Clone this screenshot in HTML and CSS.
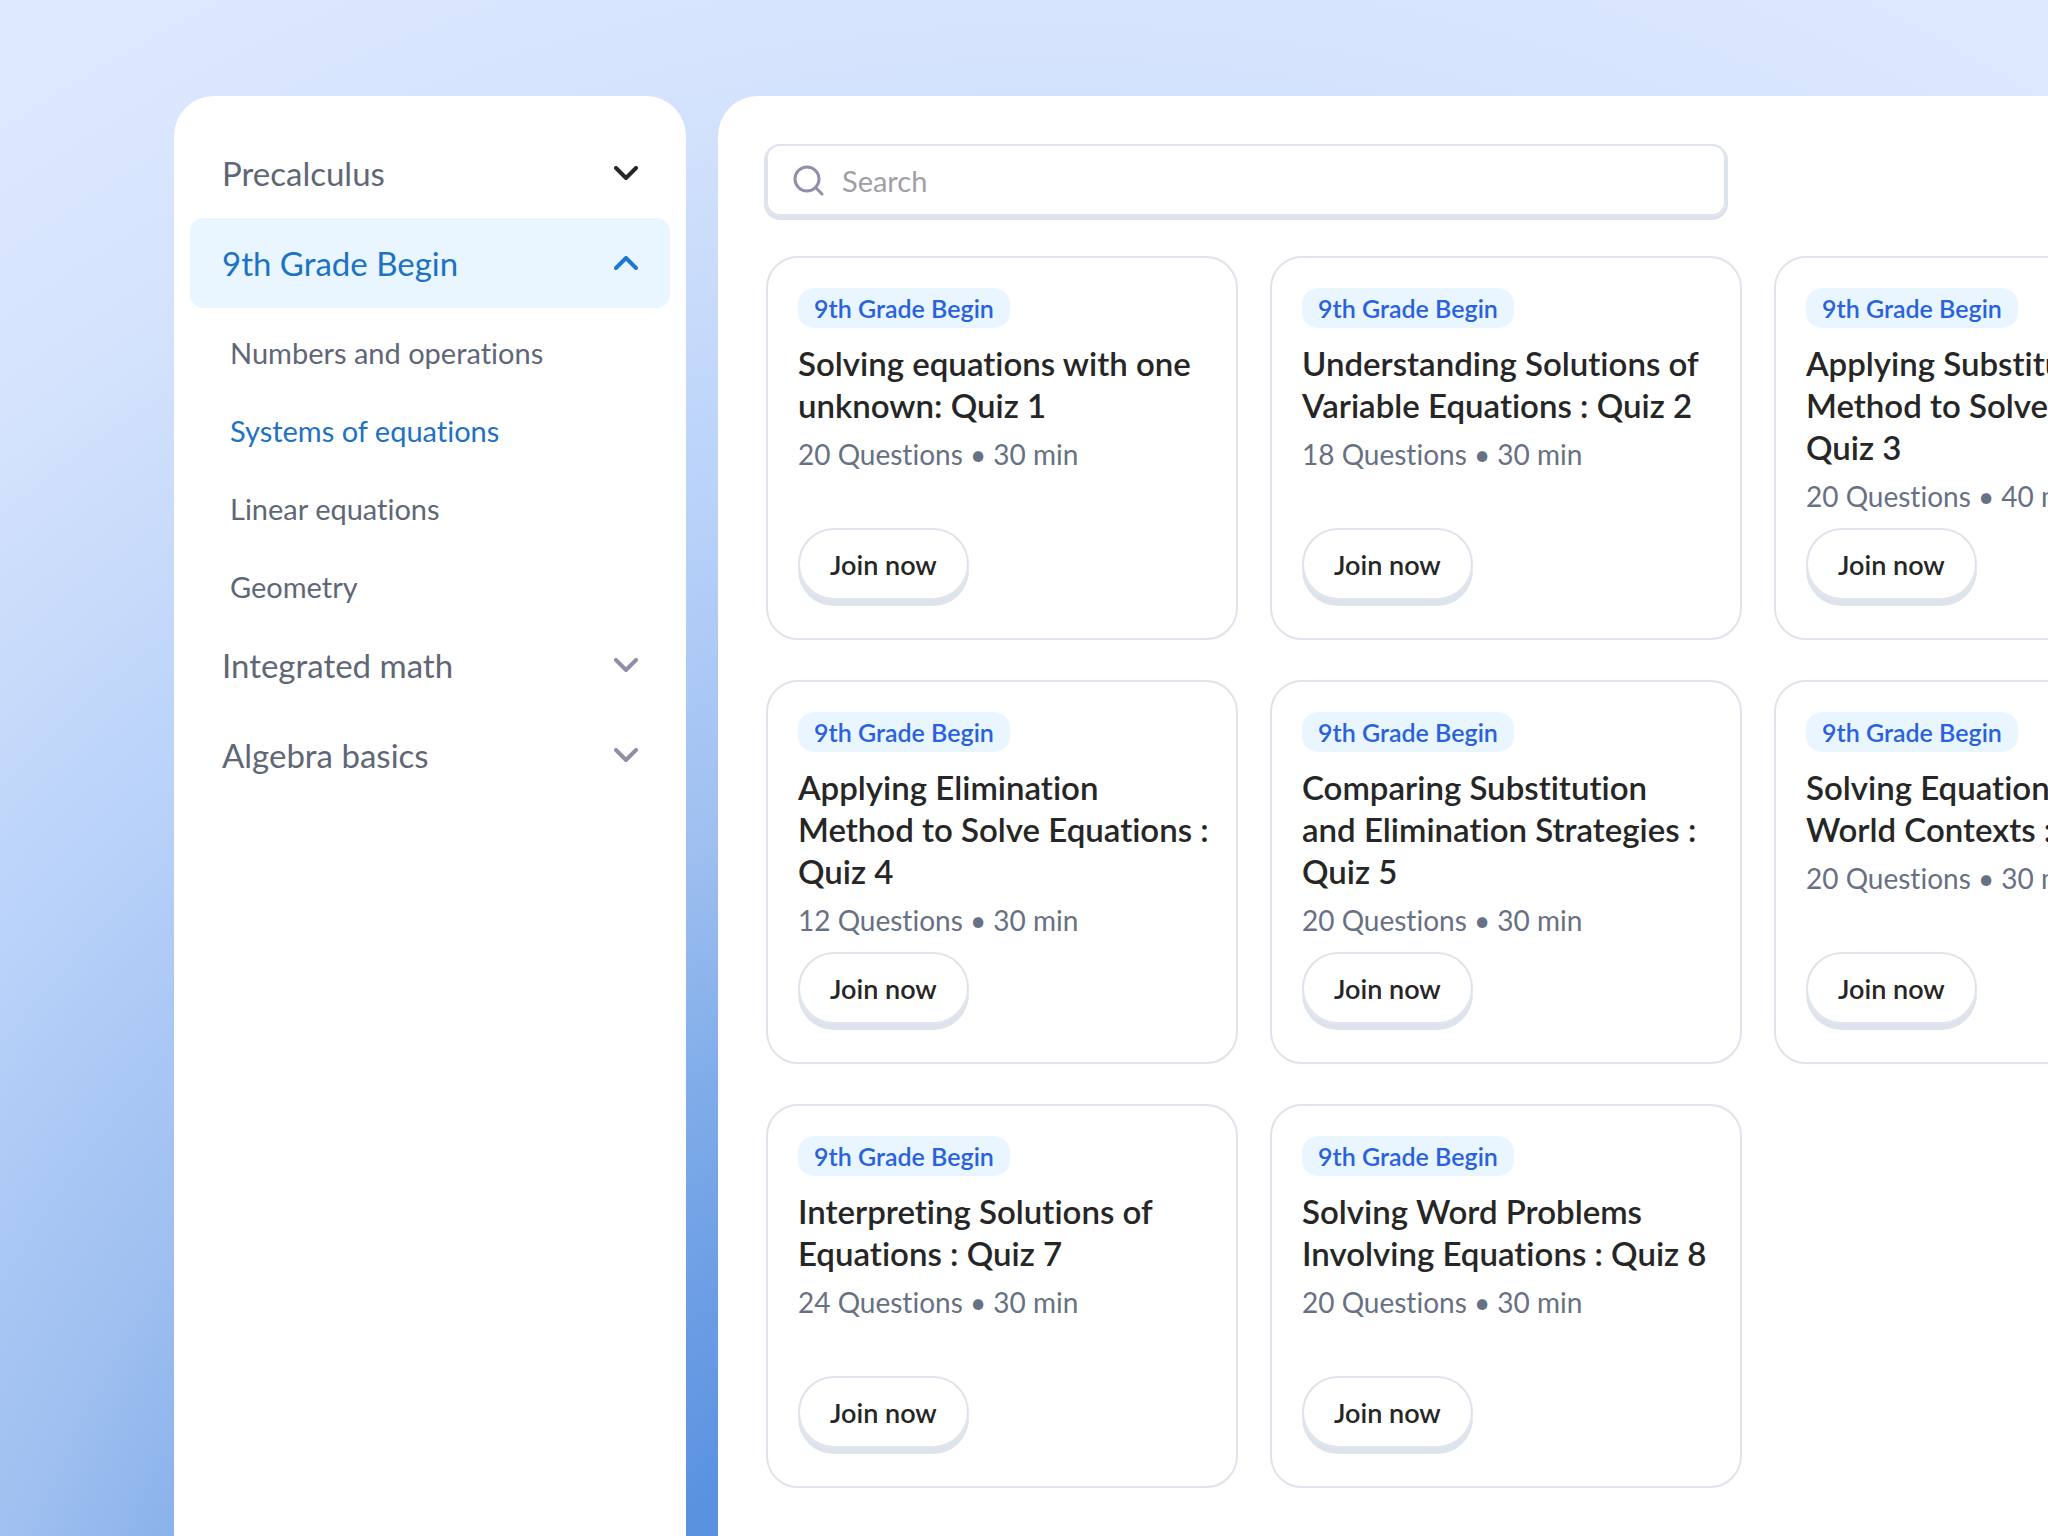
FILE: index.html
```
<!DOCTYPE html>
<html lang="en">
<head>
  <meta charset="UTF-8">
  <meta name="viewport" content="width=device-width, initial-scale=1.0">
  <title>Quizzes</title>
  <link rel="stylesheet" href="styles.css">
</head>
<body>
  <div class="app">
    <nav class="sidebar">
      <button class="group" type="button">
        Precalculus
        <svg class="arrow dark" viewBox="0 0 24 14"><path d="M2 2l10 10L22 2"/></svg>
      </button>
      <button class="group open" type="button" aria-expanded="true">
        9th Grade Begin
        <svg class="arrow" viewBox="0 0 24 14"><path d="M2 12L12 2l10 10"/></svg>
      </button>
      <ul class="topics">
        <li><a href="#">Numbers and operations</a></li>
        <li><a class="active" href="#">Systems of equations</a></li>
        <li><a href="#">Linear equations</a></li>
        <li><a href="#">Geometry</a></li>
      </ul>
      <button class="group" type="button">
        Integrated math
        <svg class="arrow" viewBox="0 0 24 14"><path d="M2 2l10 10L22 2"/></svg>
      </button>
      <button class="group" type="button">
        Algebra basics
        <svg class="arrow" viewBox="0 0 24 14"><path d="M2 2l10 10L22 2"/></svg>
      </button>
    </nav>

    <main class="content">
      <label class="search">
        <svg class="search-icon" viewBox="0 0 32 32"><circle cx="15" cy="15" r="12"/><path d="M24 24l6 6"/></svg>
        <input type="text" placeholder="Search" aria-label="Search">
      </label>

      <div class="cards">
        <article class="card">
          <span class="tag">9th Grade Begin</span>
          <h2>Solving equations with one<br>unknown: Quiz 1</h2>
          <p class="meta">20 Questions • 30 min</p>
          <button class="join" type="button">Join now</button>
        </article>
        <article class="card">
          <span class="tag">9th Grade Begin</span>
          <h2>Understanding Solutions of<br>Variable Equations : Quiz 2</h2>
          <p class="meta">18 Questions • 30 min</p>
          <button class="join" type="button">Join now</button>
        </article>
        <article class="card">
          <span class="tag">9th Grade Begin</span>
          <h2>Applying Substitution<br>Method to Solve Equations :<br>Quiz 3</h2>
          <p class="meta">20 Questions • 40 min</p>
          <button class="join" type="button">Join now</button>
        </article>
        <article class="card">
          <span class="tag">9th Grade Begin</span>
          <h2>Applying Elimination<br>Method to Solve Equations :<br>Quiz 4</h2>
          <p class="meta">12 Questions • 30 min</p>
          <button class="join" type="button">Join now</button>
        </article>
        <article class="card">
          <span class="tag">9th Grade Begin</span>
          <h2>Comparing Substitution<br>and Elimination Strategies :<br>Quiz 5</h2>
          <p class="meta">20 Questions • 30 min</p>
          <button class="join" type="button">Join now</button>
        </article>
        <article class="card">
          <span class="tag">9th Grade Begin</span>
          <h2>Solving Equations in Real<br>World Contexts : Quiz 6</h2>
          <p class="meta">20 Questions • 30 min</p>
          <button class="join" type="button">Join now</button>
        </article>
        <article class="card">
          <span class="tag">9th Grade Begin</span>
          <h2>Interpreting Solutions of<br>Equations : Quiz 7</h2>
          <p class="meta">24 Questions • 30 min</p>
          <button class="join" type="button">Join now</button>
        </article>
        <article class="card">
          <span class="tag">9th Grade Begin</span>
          <h2>Solving Word Problems<br>Involving Equations : Quiz 8</h2>
          <p class="meta">20 Questions • 30 min</p>
          <button class="join" type="button">Join now</button>
        </article>
      </div>
    </main>
  </div>
</body>
</html>
```
FILE: styles.css
```
* {
  box-sizing: border-box;
  margin: 0;
  padding: 0;
}
body {
  font-family: Lato, "Liberation Sans", sans-serif;
  font-variant-ligatures: none;
  color: #262626;
  overflow: hidden;
}
button, input {
  font: inherit;
  font-variant-ligatures: none;
  color: inherit;
  background: none;
  border: none;
}
.app {
  display: flex;
  gap: 32px;
  min-height: 100vh;
  padding: 96px 0 0 174px;
  background: radial-gradient(98vw 107vw at 51% 130%, #5a92e0 28%, #6e9fe5 37%, #80ade9 45%, #9ebff0 55%, #bad3fa 71%, #cadcfa 81%, #d5e3fd 89%, #dce8ff 100%);
}

/* sidebar */
.sidebar {
  flex: 0 0 25vw;
  padding: 32px 16px;
  background-color: #fff;
  border-radius: 40px 40px 0 0;
}
.group {
  display: flex;
  align-items: center;
  justify-content: space-between;
  width: 100%;
  height: 90px;
  padding: 0 32px;
  border-radius: 14px;
  font-size: 33px;
  color: #5f6776;
  cursor: pointer;
}
.group.open {
  background-color: #e9f6ff;
  color: #1c72c4;
}
.arrow {
  width: 24px;
  height: 14px;
  fill: none;
  stroke: #938daa;
  stroke-width: 4;
  stroke-linecap: round;
  stroke-linejoin: round;
}
.arrow.dark {
  stroke: #262626;
}
.open .arrow {
  stroke: #1c78d0;
}
.topics {
  display: grid;
  gap: 12px;
  padding: 12px 40px 0;
  list-style: none;
}
.topics a {
  display: block;
  font-size: 29px;
  line-height: 66px;
  color: #5f6776;
  text-decoration: none;
}
.topics .active {
  color: #1c72c4;
}

/* quizzes */
.content {
  flex: 1;
  min-width: 0;
  padding: 48px;
  background-color: #fff;
  border-radius: 40px 0 0 0;
  overflow: hidden;
}
.search {
  display: flex;
  align-items: center;
  gap: 18px;
  max-width: 960px;
  height: 72px;
  padding: 0 24px;
  border: 2px solid #dfe3eb;
  border-radius: 14px;
  box-shadow: 0 2px 0 2px #dde3eb;
}
.search-icon {
  width: 32px;
  height: 32px;
  fill: none;
  stroke: #938daa;
  stroke-width: 3;
  stroke-linecap: round;
}
.search input {
  flex: 1;
  font-size: 29px;
  outline: none;
}
.search input::placeholder {
  color: #a0a0a4;
}
.cards {
  display: grid;
  grid-template-columns: repeat(3, 472px);
  gap: 40px 32px;
  margin-top: 40px;
}
.card {
  display: flex;
  flex-direction: column;
  align-items: flex-start;
  min-height: 384px;
  padding: 30px;
  border: 2px solid #dfe3eb;
  border-radius: 32px;
}
.tag {
  padding: 0 16px;
  border-radius: 16px;
  background-color: #e9f6ff;
  color: #2962dc;
  font-size: 25px;
  font-weight: 600;
  line-height: 40px;
}
.card h2 {
  margin-top: 14px;
  font-size: 33px;
  font-weight: 600;
  line-height: 42px;
  white-space: nowrap;
}
.meta {
  margin-top: 10px;
  color: #687083;
  font-size: 28px;
  line-height: 36px;
}
.join {
  height: 72px;
  margin-top: auto;
  margin-bottom: 8px;
  padding: 0 30px;
  border: 2px solid #dfe3eb;
  border-radius: 36px;
  box-shadow: 0 6px 0 #dde3eb;
  font-size: 27px;
  font-weight: 600;
  cursor: pointer;
}
```
